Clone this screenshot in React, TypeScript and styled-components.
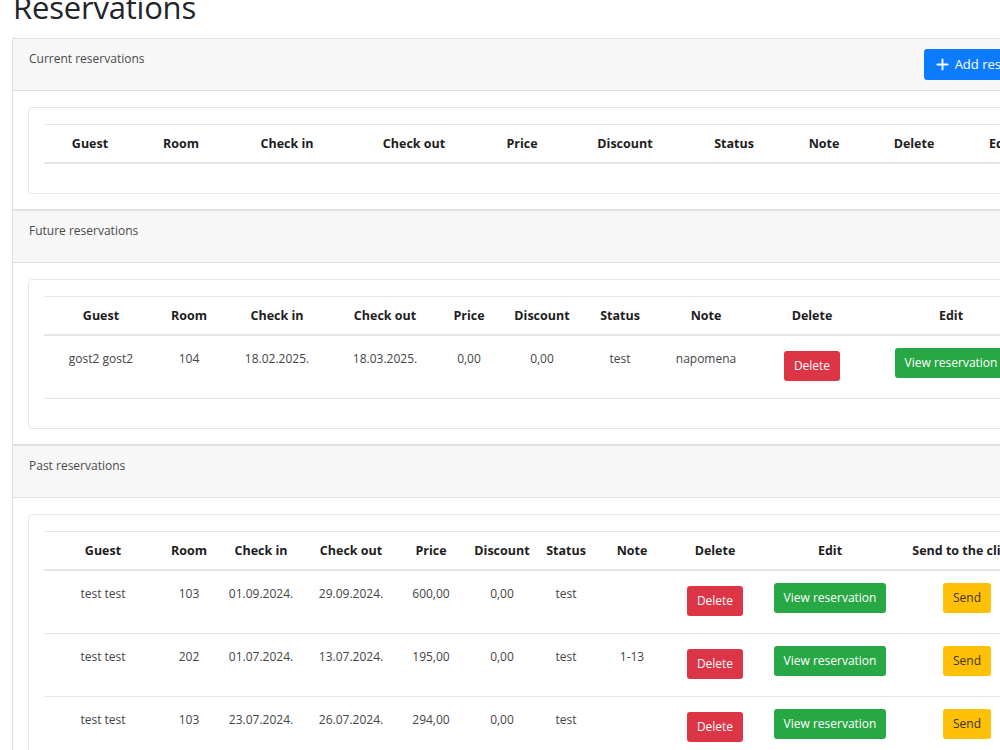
import React from "react";
import styled, { createGlobalStyle } from "styled-components";

const GlobalStyle = createGlobalStyle`
  html, body {
    margin: 0;
    padding: 0;
    overflow: hidden;
    background: #ffffff;
  }
  body {
    font-family: "Open Sans", "Noto Sans", Arial, sans-serif;
    color: #212529;
  }
`;

const Page = styled.div`
  width: 1068px;
  padding: 0 0 0 12px;
`;

const Title = styled.h1`
  margin: -12px 0 12px 1px;
  font-size: 31px;
  line-height: 38px;
  font-weight: 500;
  letter-spacing: -0.2px;
  color: #212529;
`;

const Card = styled.section`
  border: 1px solid #e0e0e0;
  background: #fff;
`;

const CardHeader = styled.header`
  display: flex;
  justify-content: space-between;
  align-items: flex-start;
  min-height: 31px;
  padding: 10px 16px;
  background: #f7f7f7;
  border-bottom: 1px solid #e0e0e0;
`;

const CardTitle = styled.span`
  font-size: 12px;
  line-height: 19px;
  color: #4a4a4a;
`;

const CardBody = styled.div`
  padding: 16px 15px 15px;
`;

const InnerCard = styled.div`
  border: 1px solid #e8e8e8;
  border-radius: 4px;
  padding: 16px 15px 15px;
`;

const Table = styled.table`
  border-collapse: collapse;
  table-layout: fixed;
  margin-bottom: 14px;
  border-top: 1px solid #e4e6e8;
`;

const Th = styled.th`
  height: 37px;
  padding: 0 4px;
  font-size: 12.5px;
  font-weight: 700;
  color: #1d1d1d;
  text-align: center;
  white-space: nowrap;
  border-bottom: 2px solid #e2e4e6;
`;

const Td = styled.td`
  padding: 13px 4px 17px;
  vertical-align: top;
  text-align: center;
  font-size: 12px;
  line-height: 20px;
  color: #444444;
  white-space: nowrap;
  border-bottom: 1px solid #e4e6e8;
`;

const Col = styled.col<{ $w: number }>`
  width: ${(p) => p.$w}px;
`;

type Variant = "danger" | "success" | "warning" | "primary";

const palette: Record<Variant, { bg: string; fg: string }> = {
  danger: { bg: "#dc3545", fg: "#ffffff" },
  success: { bg: "#28a745", fg: "#ffffff" },
  warning: { bg: "#ffc107", fg: "#3b3320" },
  primary: { bg: "#0d7bff", fg: "#ffffff" },
};

const Button = styled.button<{ $variant: Variant; $offset?: number }>`
  display: inline-flex;
  align-items: center;
  gap: 6px;
  height: 30px;
  margin-top: ${(p) => p.$offset ?? 0}px;
  padding: 0 10px;
  border: none;
  border-radius: 3px;
  font-family: inherit;
  font-size: 12px;
  line-height: 1;
  background: ${(p) => palette[p.$variant].bg};
  color: ${(p) => palette[p.$variant].fg};
  white-space: nowrap;
  cursor: pointer;
`;

const AddButton = styled(Button)`
  height: 31px;
  padding: 0 12px;
  font-size: 13px;
`;

const PlusIcon = () => (
  <svg width="13" height="13" viewBox="0 0 14 14" aria-hidden="true">
    <path d="M7 1.5v11M1.5 7h11" stroke="currentColor" strokeWidth="2" strokeLinecap="round" />
  </svg>
);

type Row = {
  guest: string;
  room: string;
  checkIn: string;
  checkOut: string;
  price: string;
  discount: string;
  status: string;
  note: string;
};

const baseHeads = ["Guest", "Room", "Check in", "Check out", "Price", "Discount", "Status", "Note", "Delete", "Edit"];

const futureRows: Row[] = [
  { guest: "gost2 gost2", room: "104", checkIn: "18.02.2025.", checkOut: "18.03.2025.", price: "0,00", discount: "0,00", status: "test", note: "napomena" },
];

const pastRows: Row[] = [
  { guest: "test test", room: "103", checkIn: "01.09.2024.", checkOut: "29.09.2024.", price: "600,00", discount: "0,00", status: "test", note: "" },
  { guest: "test test", room: "202", checkIn: "01.07.2024.", checkOut: "13.07.2024.", price: "195,00", discount: "0,00", status: "test", note: "1-13" },
  { guest: "test test", room: "103", checkIn: "23.07.2024.", checkOut: "26.07.2024.", price: "294,00", discount: "0,00", status: "test", note: "" },
];

const ReservationTable: React.FC<{ widths: number[]; heads: string[]; rows: Row[]; withSend?: boolean }> = ({ widths, heads, rows, withSend }) => (
  <Table>
    <colgroup>
      {widths.map((w, i) => (
        <Col key={i} $w={w} />
      ))}
    </colgroup>
    <thead>
      <tr>
        {heads.map((h) => (
          <Th key={h}>{h}</Th>
        ))}
      </tr>
    </thead>
    <tbody>
      {rows.map((r, i) => (
        <tr key={i}>
          <Td>{r.guest}</Td>
          <Td>{r.room}</Td>
          <Td>{r.checkIn}</Td>
          <Td>{r.checkOut}</Td>
          <Td>{r.price}</Td>
          <Td>{r.discount}</Td>
          <Td>{r.status}</Td>
          <Td>{r.note}</Td>
          <Td>
            <Button $variant="danger" $offset={2}>Delete</Button>
          </Td>
          <Td>
            <Button $variant="success" $offset={-1}>View reservation</Button>
          </Td>
          {withSend && (
            <Td>
              <Button $variant="warning" $offset={-1}>Send</Button>
            </Td>
          )}
        </tr>
      ))}
    </tbody>
  </Table>
);

export default function App() {
  return (
    <>
      <GlobalStyle />
      <Page>
        <Title>Reservations</Title>
        <Card>
          <CardHeader>
            <CardTitle>Current reservations</CardTitle>
            <AddButton $variant="primary">
              <PlusIcon />
              Add reservation
            </AddButton>
          </CardHeader>
          <CardBody>
            <InnerCard>
              <ReservationTable widths={[92, 90, 122, 132, 84, 122, 96, 84, 96, 78]} heads={baseHeads} rows={[]} />
            </InnerCard>
          </CardBody>
        </Card>
        <Card>
          <CardHeader>
            <CardTitle>Future reservations</CardTitle>
          </CardHeader>
          <CardBody>
            <InnerCard>
              <ReservationTable widths={[114, 62, 114, 102, 66, 80, 76, 96, 116, 162]} heads={baseHeads} rows={futureRows} />
            </InnerCard>
          </CardBody>
        </Card>
        <Card>
          <CardHeader>
            <CardTitle>Past reservations</CardTitle>
          </CardHeader>
          <CardBody>
            <InnerCard>
              <ReservationTable
                widths={[118, 54, 90, 90, 70, 72, 56, 76, 90, 140, 134]}
                heads={[...baseHeads, "Send to the client"]}
                rows={pastRows}
                withSend
              />
            </InnerCard>
          </CardBody>
        </Card>
      </Page>
    </>
  );
}
